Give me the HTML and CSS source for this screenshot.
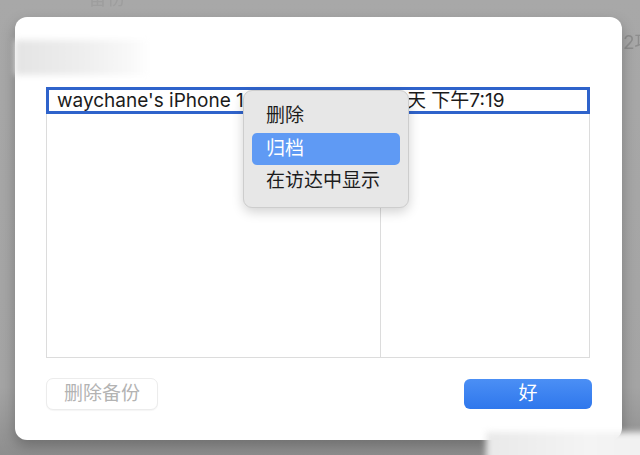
FILE: index.html
```html
<!DOCTYPE html>
<html lang="zh-CN">
<head>
<meta charset="utf-8">
<title>备份</title>
<link rel="stylesheet" href="styles.css">
</head>
<body>
<div class="screen">
  <span class="bg-text bg-top">备份</span>
  <span class="bg-text bg-right">2项</span>
  <div class="dialog">
    <div class="title-blur"></div>
    <div class="table">
      <div class="row selected">
        <div class="cell name">waychane's iPhone 12</div>
        <div class="cell date">今天 下午7:19</div>
      </div>
      <div class="rows">
        <div class="col col-1"></div>
        <div class="col col-2"></div>
      </div>
    </div>
    <div class="actions">
      <button class="btn btn-disabled">删除备份</button>
      <button class="btn btn-primary">好</button>
    </div>
    <div class="menu">
      <div class="menu-item">删除</div>
      <div class="menu-item active">归档</div>
      <div class="menu-item">在访达中显示</div>
    </div>
  </div>
  <div class="watermark"></div>
</div>
</body>
</html>
```

FILE: styles.css
```css
html, body {
  margin: 0;
  padding: 0;
}
body {
  font-family: "Inter", "Noto Sans CJK SC", sans-serif;
  background: #a3a3a3;
}
.screen {
  position: relative;
  width: 640px;
  height: 455px;
  overflow: hidden;
  background: linear-gradient(to bottom, #a8a8a8 0%, #a4a4a4 85%, #8e8e8e 100%);
  padding-top: 17px;
  box-sizing: border-box;
}
.bg-text {
  position: absolute;
  color: #8d8d8d;
  font-size: 19px;
  white-space: nowrap;
  filter: blur(0.6px);
}
.bg-top {
  left: 88px;
  top: -17px;
  color: #9e9e9e;
}
.bg-right {
  left: 623px;
  top: 27px;
}
.dialog {
  position: relative;
  margin-left: 15px;
  width: 607px;
  height: 423px;
  background: #ffffff;
  border-radius: 12px;
  box-shadow: 0 6px 14px rgba(0, 0, 0, 0.25);
  padding: 0 30px 0 31px;
  box-sizing: border-box;
  display: flex;
  flex-direction: column;
}
.title-blur {
  margin: 23px 0 0 -31px;
  width: 135px;
  height: 35px;
  background: linear-gradient(to right, #e4e4e4 0%, #eeeeee 50%, #f8f8f8 85%, #ffffff 100%);
  filter: blur(3px);
}
.table {
  margin-top: 12px;
  width: 544px;
  height: 271px;
  box-sizing: border-box;
  border: 1px solid #dcdcdc;
  border-top: none;
  display: flex;
  flex-direction: column;
}
.row {
  display: grid;
  grid-template-columns: 332px 1fr;
  height: 27px;
  box-sizing: border-box;
  margin: 0 -1px;
}
.row.selected {
  border: 3px solid #2f63cb;
  background: #ffffff;
}
.cell {
  font-size: 19px;
  line-height: 21px;
  color: #1b1b1b;
  white-space: nowrap;
}
.cell.name {
  padding-left: 8px;
}
.cell.date {
  padding-left: 7px;
}
.rows {
  flex: 1;
  display: grid;
  grid-template-columns: 334px 1fr;
}
.col-1 {
  border-right: 1px solid #dcdcdc;
}
.actions {
  margin-top: 20px;
  display: flex;
  justify-content: space-between;
  align-items: flex-start;
  width: 546px;
}
.btn {
  font-family: "Inter", "Noto Sans CJK SC", sans-serif;
  font-size: 19px;
  height: 32px;
  border-radius: 7px;
  padding: 0;
  line-height: 30px;
}
.btn-disabled {
  width: 112px;
  background: #ffffff;
  color: #b3b3b3;
  border: 1px solid #ececec;
  box-shadow: 0 1px 1px rgba(0, 0, 0, 0.04);
}
.btn-primary {
  width: 128px;
  height: 30px;
  margin-top: 1px;
  background: linear-gradient(to bottom, #4b8ff5, #2f77ec);
  color: #ffffff;
  border: none;
  border-radius: 6px;
  line-height: 30px;
}
.menu {
  position: absolute;
  left: 228px;
  top: 73px;
  width: 166px;
  padding: 9px 0;
  box-sizing: border-box;
  background: #e7e7e7;
  border: 1px solid #cdcdcd;
  border-radius: 9px;
  box-shadow: 0 4px 12px rgba(0, 0, 0, 0.18);
}
.menu-item {
  margin: 0 8px;
  height: 32.5px;
  line-height: 32px;
  padding-left: 14px;
  font-size: 19px;
  color: #1c1c1c;
  border-radius: 5px;
}
.menu-item.active {
  background: #5f9af4;
  color: #ffffff;
}
.watermark {
  position: absolute;
  left: 486px;
  top: 432px;
  width: 170px;
  height: 30px;
  background: linear-gradient(to right, #e9e9e9, #f4f4f4 60%, #f0f0f0);
  filter: blur(3px);
}
```
